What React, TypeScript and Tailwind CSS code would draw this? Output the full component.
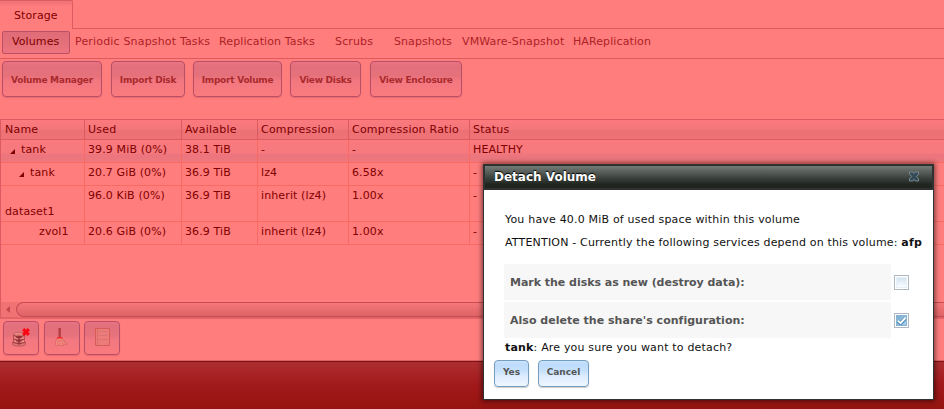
import React from 'react';

const subTabs = [
  { label: 'Periodic Snapshot Tasks', box: 'w-[144px] tracking-[0.17px]' },
  { label: 'Replication Tasks', box: 'w-[116px] tracking-[0.12px]' },
  { label: 'Scrubs', box: 'w-[59px] tracking-[0.15px]' },
  { label: 'Snapshots', box: 'w-[68px] tracking-[0.08px]' },
  { label: 'VMWare-Snapshot', box: 'w-[111px] tracking-[0.13px]' },
  { label: 'HAReplication', box: 'w-[90px] tracking-[0.1px]' },
];

const actions = [
  { label: 'Volume Manager', box: 'w-[100px] mr-[9px]' },
  { label: 'Import Disk', box: 'w-[74px] mr-[8px]' },
  { label: 'Import Volume', box: 'w-[89px] mr-[8px]' },
  { label: 'View Disks', box: 'w-[71px] mr-[9px]' },
  { label: 'View Enclosure', box: 'w-[92px]' },
];

const rows = [
  { name: 'tank', indent: 'pl-[7px]', arrow: true, h: 'h-[23px]', pad: '', cells: ['39.9 MiB (0%)', '38.1 TiB', '-', '-', 'HEALTHY'] },
  { name: 'tank', indent: 'pl-[16px]', arrow: true, h: 'h-[23px]', pad: '', cells: ['20.7 GiB (0%)', '36.9 TiB', 'lz4', '6.58x', '-'] },
  { name: 'dataset1', indent: 'pl-[4px]', arrow: false, h: 'h-[36px]', pad: 'pt-[16px]', cells: ['96.0 KiB (0%)', '36.9 TiB', 'inherit (lz4)', '1.00x', '-'] },
  { name: 'zvol1', indent: 'pl-[38px]', arrow: false, h: 'h-[23px]', pad: '', cells: ['20.6 GiB (0%)', '36.9 TiB', 'inherit (lz4)', '1.00x', '-'] },
];

const grid = 'grid grid-cols-[84px_97px_76px_91px_121px_1fr]';
const buttonSkin =
  'border border-[#b84f68] rounded-[4px] bg-[linear-gradient(#eb7482_0%,#e2707c_12%,#e5717b_40%,#f27780_55%,#fa7b7e_100%)] shadow-[0_1px_1px_rgba(190,60,80,0.3)]';

function DetachIcon() {
  return (
    <svg className="shrink-0" width="20" height="20" viewBox="0 0 20 20">
      <path d="M2.5 17.5v-2h1V8c0-3 11-3 11 0v7.5h1v2c-1 2-12 2-13 0z" fill="#dd7874" stroke="#b84b50" strokeWidth="0.8" />
      <path d="M3.5 8.5q5.5 3 11 0M3.5 12q5.5 3 11 0M2.8 15.4q6.2 3 12.4 0" fill="none" stroke="#9b363d" strokeWidth="1" />
      <path d="M4.5 7.2q4.5-1.8 8.5 0M4.5 11h3M11 11h3M4.5 14.5h3M11 14.5h3" fill="none" stroke="#f0988d" strokeWidth="1" />
      <path d="M9 8.5v9M6.2 10.3h5.6M6.2 13.9h5.6" stroke="#8f2c34" strokeWidth="1.4" />
      <path d="M13.2 2.2l5.6 5.6M18.8 2.2l-5.6 5.6" stroke="#fc0812" strokeWidth="3.2" />
    </svg>
  );
}

function BroomIcon() {
  return (
    <svg className="shrink-0" width="20" height="20" viewBox="0 0 20 20">
      <path d="M7.5 1h2.3v9H7.5z" fill="#b23d40" />
      <path d="M6.5 10.5L4.5 15v3.5h8v-1.5l4 1-.5-1.5-3-2.5-2-3.5z" fill="#f58d80" stroke="#dc6864" strokeWidth="0.8" />
      <path d="M7.2 12.5L6.5 18M9 12.5V18M10.6 12.5l1.4 5M12 13.5l3 3.5" stroke="#d96565" strokeWidth="0.7" />
      <path d="M6 11.2q2.6-1 5.4 0" fill="none" stroke="#f91b22" strokeWidth="1.3" />
    </svg>
  );
}

function PageIcon() {
  return (
    <svg className="shrink-0" width="20" height="20" viewBox="0 0 20 20">
      <path d="M4.5 1.5h14v17h-14z" fill="#ec7c7a" stroke="#d65c57" />
      <path d="M6.5 2v16" stroke="#d96762" strokeWidth="0.7" />
      <path d="M7.5 4.5h9M7.5 8.5h9M7.5 12.5h9" stroke="#d77074" strokeWidth="0.8" />
    </svg>
  );
}

function CheckBox({ checked }: { checked?: boolean }) {
  return (
    <span className="block h-[15px] w-[15px] border border-[#b0b8c3] bg-white p-px">
      <span
        className={
          checked
            ? 'block h-[11px] w-[11px] bg-[linear-gradient(135deg,#79a9cb,#acd2ed)] outline-1 -outline-offset-1 outline-[#88b4d3]'
            : 'block h-[11px] w-[11px] bg-[linear-gradient(#cfe0f1,#edf5fd_65%,#fff)] outline-1 -outline-offset-1 outline-[#e8eff7]'
        }
      >
        {checked && (
          <svg width="11" height="11" viewBox="0 0 11 11">
            <path d="M2 6l2.5 2.5L9.5 3" fill="none" stroke="#4183b6" strokeWidth="3.4" />
            <path d="M2 5.6l2.5 2.5L9.5 2.7" fill="none" stroke="#fff" strokeWidth="2" />
          </svg>
        )}
      </span>
    </span>
  );
}

function DialogButton({ label, box }: { label: string; box: string }) {
  return (
    <button
      className={`${box} h-[27px] rounded-[4px] border border-[#759dc0] bg-[linear-gradient(#cbe3fc_0%,#bedcfb_15%,#c6e1fc_40%,#dcecfe_60%,#eff6ff_100%)] pb-[3px] text-[9px] font-bold text-[#555] shadow-[0_1px_1px_rgba(0,0,0,0.2)]`}
    >
      {label}
    </button>
  );
}

export default function App() {
  return (
    <div className="relative flex h-[409px] w-[944px] flex-col overflow-hidden whitespace-nowrap bg-[#ff7d7d] font-['DejaVu_Sans',sans-serif] text-[11px] leading-[16px] text-[#7f0000]">
      <header className="flex h-[29px] shrink-0">
        <div className="h-[29px] w-[73px] rounded-tr-[2px] border-t border-r border-[#dc5b60] bg-[linear-gradient(#ee7176,#ff7d7d_6px)] pt-[7px] pl-[14px] tracking-[0.1px]">Storage</div>
        <div className="flex-1 border-b border-[#dc5b60]" />
      </header>

      <nav className="flex h-[30px] shrink-0 border-b border-[#dc5b60] pt-[2px] pl-[2px] text-[#ad2225]">
        <div className="h-[23px] w-[68px] rounded-[2px] border border-[#ba5065] bg-[linear-gradient(#df6c78,#e36f79_50%,#ee7580)] pt-[2px] pl-[9px] tracking-[0.1px] text-[#7f0000]">Volumes</div>
        <div className="flex pt-[3px] pl-[5px]">
          {subTabs.map((t) => (
            <div key={t.label} className={t.box}>{t.label}</div>
          ))}
        </div>
      </nav>

      <div className="flex h-[60px] shrink-0 pt-[2px] pl-[2px]">
        {actions.map((a) => (
          <button key={a.label} className={`${a.box} ${buttonSkin} h-[36px] pt-px text-[9px] font-bold tracking-[-0.25px] text-[#a92a2d]`}>{a.label}</button>
        ))}
      </div>

      <main className="flex h-[183px] shrink-0 flex-col border-l border-[#dc5b60]">
        <div className={`${grid} h-[21px] border-y border-[#dc5b60] bg-[linear-gradient(#fc7a7d_0%,#f2767b_50%,#ec7175_55%,#ee7276_100%)] tracking-[0.22px]`}>
          {['Name', 'Used', 'Available', 'Compression', 'Compression Ratio', 'Status'].map((h, i) => (
            <div key={h} className={`${i === 0 ? 'pl-[4px]' : 'pl-[3px]'} ${i === 5 ? '' : 'border-r'} border-[#dc5b60] pt-[2px]`}>{h}</div>
          ))}
        </div>
        {rows.map((r, n) => (
          <div
            key={n}
            className={`${grid} ${r.h} border-b border-[#f96a62] tracking-[0.12px] ${n === 0 ? 'bg-[linear-gradient(#fa7a7d,#f5797e_60%,#ec757e_65%,#ef777d)]' : ''}`}
          >
            <div className={`flex border-r border-[#f96a62] pt-[2px] ${r.indent}`}>
              {r.arrow && (
                <svg className="mt-[6px] mr-[6px] ml-px h-[7px] w-[6px] shrink-0" viewBox="0 0 6 7">
                  <path d="M6 1v5H1z" fill="#7f0000" />
                </svg>
              )}
              <span className={r.pad}>{r.name}</span>
            </div>
            {r.cells.map((c, i) => (
              <div key={i} className={`${i === 4 ? '' : 'border-r'} border-[#f96a62] pt-[2px] pl-[3px]`}>{c}</div>
            ))}
          </div>
        ))}
      </main>

      <div className="flex h-[17px] shrink-0 border-b-2 border-l border-b-[#e36468] border-l-[#dc5b60] bg-[#f07273]">
        <svg className="mt-[3px] ml-[4px] h-[9px] w-[11px]" viewBox="0 0 11 9">
          <path d="M5 1v7L1 4.5z" fill="#c6464e" />
        </svg>
        <div className="h-[15px] flex-1 rounded-l-[8px] border border-r-0 border-[#c54b51] bg-[linear-gradient(#f77779,#eb6e71_45%,#df6367)]" />
      </div>

      <div className="flex h-[42px] shrink-0 gap-[4.5px] border-b border-[#db6367] pt-[2px] pl-[3px]">
        {[DetachIcon, BroomIcon, PageIcon].map((Icon, i) => (
          <button key={i} className={`${buttonSkin} flex h-[34px] w-[36px] justify-center pt-[5px] pr-[2px]`}><Icon /></button>
        ))}
      </div>
      <footer className="h-[48px] shrink-0 border-t border-[#811014] bg-[linear-gradient(#ad2e30_0%,#a2191b_50%,#94140f_100%)]" />

      <section className="absolute top-[164px] left-[483px] flex h-[236px] w-[451px] flex-col border border-[#303331] bg-white text-[#111] shadow-[0_0_5px_1px_rgba(0,0,0,0.55)]">
        <div className="flex h-[25px] shrink-0 justify-between border border-b-2 border-[#303030] bg-[linear-gradient(#747b77_0%,#555b57_30%,#353c37_60%,#20241f_85%,#202420_100%)] pt-[3px] pr-[12px] pl-[9px] text-[12px] font-bold text-white [text-shadow:0_-1px_1px_#000]">
          <span>Detach Volume</span>
          <svg className="mt-[2px]" width="12" height="11" viewBox="0 0 12 11">
            <path d="M1.5 1h3.3L6 2.6 7.2 1h3.3v2L8.4 5.5l2.1 2.5v2H7.2L6 8.4 4.8 10H1.5V8l2.1-2.5L1.5 3z" fill="#334955" stroke="#7e8f99" strokeWidth="0.9" />
          </svg>
        </div>
        <p className="mt-[22px] ml-[21px] h-[23px] tracking-[0.19px]">You have 40.0 MiB of used space within this volume</p>
        <p className="ml-[21px] h-[29px] tracking-[0.18px]">ATTENTION - Currently the following services depend on this volume: <b>afp</b></p>
        <div className="ml-[20px] grid grid-cols-[387px_20px] gap-x-[3px] gap-y-[2px]">
          <div className="flex h-[36px] items-center bg-[#f7f7f7] pt-[2px] pl-[6px] font-bold tracking-[-0.03px] text-[#555]">Mark the disks as new (destroy data):</div>
          <div className="flex items-center"><CheckBox /></div>
          <div className="flex h-[36px] items-center bg-[#f7f7f7] pt-[2px] pl-[6px] font-bold tracking-[0.02px] text-[#555]">Also delete the share's configuration:</div>
          <div className="flex items-center"><CheckBox checked /></div>
        </div>
        <p className="mt-[2px] ml-[21px] h-[20px] tracking-[0.18px]"><b>tank</b>: Are you sure you want to detach?</p>
        <div className="ml-[10px] flex gap-[9px]">
          <DialogButton label="Yes" box="w-[35px]" />
          <DialogButton label="Cancel" box="w-[51px]" />
        </div>
      </section>
    </div>
  );
}
